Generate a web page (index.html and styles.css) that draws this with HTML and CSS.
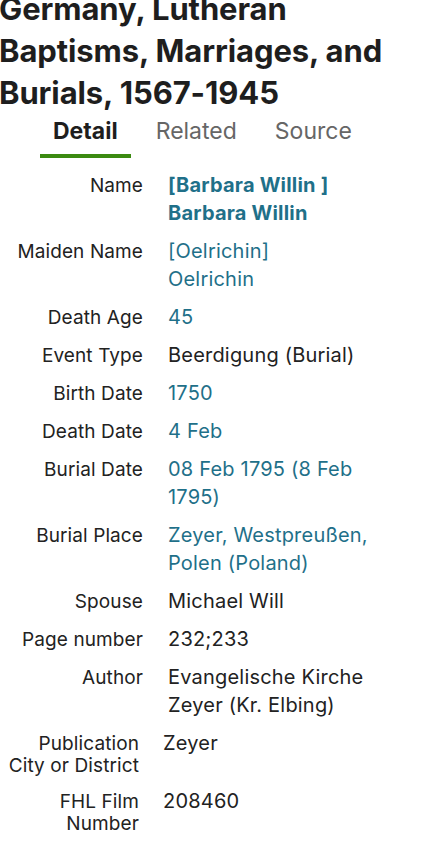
FILE: index.html
```html
<!DOCTYPE html>
<html lang="en">
<head>
<meta charset="utf-8">
<title>Record detail</title>
<link rel="stylesheet" href="styles.css">
</head>
<body>
<main class="page">
  <h1 class="title">Germany, Lutheran Baptisms, Marriages, and Burials, 1567-1945</h1>
  <nav class="tabs">
    <a class="tab tab-active">Detail</a>
    <a class="tab">Related</a>
    <a class="tab">Source</a>
  </nav>
  <dl class="facts">
    <div class="row"><dt>Name</dt><dd class="link strong">[Barbara Willin ]<br>Barbara Willin</dd></div>
    <div class="row"><dt>Maiden Name</dt><dd class="link">[Oelrichin]<br>Oelrichin</dd></div>
    <div class="row"><dt>Death Age</dt><dd class="link">45</dd></div>
    <div class="row"><dt>Event Type</dt><dd>Beerdigung (Burial)</dd></div>
    <div class="row"><dt>Birth Date</dt><dd class="link">1750</dd></div>
    <div class="row"><dt>Death Date</dt><dd class="link">4 Feb</dd></div>
    <div class="row"><dt>Burial Date</dt><dd class="link">08 Feb 1795 (8 Feb 1795)</dd></div>
    <div class="row"><dt>Burial Place</dt><dd class="link">Zeyer, Westpreußen, Polen (Poland)</dd></div>
    <div class="row"><dt>Spouse</dt><dd>Michael Will</dd></div>
    <div class="row"><dt>Page number</dt><dd>232;233</dd></div>
    <div class="row"><dt>Author</dt><dd>Evangelische Kirche Zeyer (Kr. Elbing)</dd></div>
  </dl>
  <dl class="facts facts-source">
    <div class="row"><dt>Publication City or District</dt><dd>Zeyer</dd></div>
    <div class="row"><dt>FHL Film Number</dt><dd>208460</dd></div>
  </dl>
</main>
</body>
</html>
```
FILE: styles.css
```css
* { box-sizing: border-box; }
html, body { margin: 0; padding: 0; background: #ffffff; }
body {
  font-family: Inter, "Noto Sans", "Liberation Sans", sans-serif;
  color: #1f1f1f;
}
.page { width: 447px; overflow: hidden; }
.title {
  margin: -12px 0 0 -1px;
  font-size: 31px;
  line-height: 42px;
  font-weight: 700;
  letter-spacing: -0.1px;
  color: #1e1e1e;
  width: 410px;
}
.tabs {
  display: flex;
  gap: 12px;
  margin: -2px 0 0 40px;
}
.tab {
  padding: 6px 13px 10px;
  font-size: 23px;
  line-height: 26px;
  color: #666666;
  border-bottom: 4px solid transparent;
}
.tab-active {
  font-weight: 700;
  color: #1e1e1e;
  border-bottom-color: #3b8a11;
}
.facts {
  margin: 13px 0 0 0;
  display: flex;
  flex-direction: column;
  gap: 10px;
}
.row {
  display: grid;
  grid-template-columns: 143px 1fr;
  column-gap: 25px;
  align-items: baseline;
}
dt {
  text-align: right;
  font-size: 19px;
  line-height: 22px;
  letter-spacing: 0.1px;
  color: #222222;
}
dd {
  margin: 0;
  font-size: 20px;
  line-height: 28px;
  letter-spacing: 0.2px;
  color: #222222;
  max-width: 220px;
}
.link { color: #1f7089; }
.strong { font-weight: 700; }
.facts-source { margin-top: 10px; }
.facts-source .row {
  grid-template-columns: 139px 1fr;
  column-gap: 24px;
}
```
